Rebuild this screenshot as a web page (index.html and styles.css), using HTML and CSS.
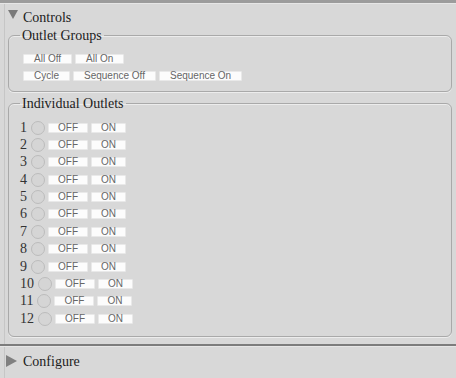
FILE: index.html
```html
<!DOCTYPE html>
<html>
<head>
  <meta charset="utf-8">
  <title>Outlet Controls</title>
  <meta name="viewport" content="width=device-width, initial-scale=1">
  <link rel="stylesheet" href="styles.css">
</head>
<body>
  <div class="panel">
    <div class="section">
      <div class="section-head"><span class="tri tri--open"></span>Controls</div>

      <fieldset class="group group--groups">
        <legend>Outlet Groups</legend>
        <div class="btn-row">
          <button class="btn">All Off</button>
          <button class="btn">All On</button>
        </div>
        <div class="btn-row">
          <button class="btn">Cycle</button>
          <button class="btn">Sequence Off</button>
          <button class="btn">Sequence On</button>
        </div>
      </fieldset>

      <fieldset class="group group--outlets">
        <legend>Individual Outlets</legend>
        <div class="outlet"><span class="num">1</span><span class="led"></span><button class="btn btn--off">OFF</button><button class="btn btn--on">ON</button></div>
        <div class="outlet"><span class="num">2</span><span class="led"></span><button class="btn btn--off">OFF</button><button class="btn btn--on">ON</button></div>
        <div class="outlet"><span class="num">3</span><span class="led"></span><button class="btn btn--off">OFF</button><button class="btn btn--on">ON</button></div>
        <div class="outlet"><span class="num">4</span><span class="led"></span><button class="btn btn--off">OFF</button><button class="btn btn--on">ON</button></div>
        <div class="outlet"><span class="num">5</span><span class="led"></span><button class="btn btn--off">OFF</button><button class="btn btn--on">ON</button></div>
        <div class="outlet"><span class="num">6</span><span class="led"></span><button class="btn btn--off">OFF</button><button class="btn btn--on">ON</button></div>
        <div class="outlet"><span class="num">7</span><span class="led"></span><button class="btn btn--off">OFF</button><button class="btn btn--on">ON</button></div>
        <div class="outlet"><span class="num">8</span><span class="led"></span><button class="btn btn--off">OFF</button><button class="btn btn--on">ON</button></div>
        <div class="outlet"><span class="num">9</span><span class="led"></span><button class="btn btn--off">OFF</button><button class="btn btn--on">ON</button></div>
        <div class="outlet"><span class="num">10</span><span class="led"></span><button class="btn btn--off">OFF</button><button class="btn btn--on">ON</button></div>
        <div class="outlet"><span class="num">11</span><span class="led"></span><button class="btn btn--off">OFF</button><button class="btn btn--on">ON</button></div>
        <div class="outlet"><span class="num">12</span><span class="led"></span><button class="btn btn--off">OFF</button><button class="btn btn--on">ON</button></div>
      </fieldset>
    </div>

    <div class="section section--closed">
      <div class="section-head"><span class="tri tri--closed"></span>Configure</div>
    </div>
  </div>
</body>
</html>
```

FILE: styles.css
```css
body {
  margin: 0;
  background-color: #d8d8d8;
  color: #1c1c1c;
  font-family: "Liberation Serif", "Times New Roman", serif;
  font-size: 14px;
  line-height: 16px;
}

.panel {
  margin-left: 4px;
  border-left: 1px solid #c6c6c6;
  min-height: 378px;
}

.section {
  border-top: 3px solid #9c9c9c;
  box-shadow: inset 0 1px 0 #e6e6e6;
  margin-left: -5px;
  padding-left: 5px;
}

.section--closed {
  margin-top: 7px;
  border-top: 2px solid #7c7c7c;
}

.section-head {
  display: flex;
  align-items: flex-start;
  padding-top: 7px;
}

.section--closed .section-head {
  padding-top: 8px;
}

.tri {
  width: 0;
  height: 0;
  margin-right: 5px;
}

.tri--open {
  margin-left: 3px;
  border-left: 5px solid transparent;
  border-right: 5px solid transparent;
  border-top: 9px solid #7a7a7a;
}

.tri--closed {
  margin-left: 1px;
  margin-top: 1px;
  border-top: 6px solid transparent;
  border-bottom: 6px solid transparent;
  border-left: 11px solid #808080;
  margin-right: 6px;
}

/* fieldsets */

.group {
  margin: 1px 4px 0 3px;
  padding: 10px 8px 10px 11px;
  border: 1px solid #a9a9a9;
  border-radius: 6px;
  box-shadow: inset 0 1px 0 #ececec, 0 1px 0 #ececec;
  min-width: 0;
}

.group legend {
  padding: 1px 2px 0;
  margin-left: 0;
}

.group--outlets {
  margin-top: 3px;
  padding-top: 7px;
  padding-bottom: 9px;
}

.btn-row {
  display: flex;
  gap: 3px;
  margin-left: 3px;
}

.btn-row + .btn-row {
  margin-top: 7px;
}

.btn {
  margin: 0;
  height: 10px;
  padding: 0 10px;
  border: 1px solid #e9e9e9;
  border-radius: 1px;
  background-color: #fcfcfc;
  color: #666;
  font-family: "Liberation Sans", Arial, sans-serif;
  font-size: 10px;
  line-height: 8px;
}

/* outlets */

.outlet {
  display: flex;
  align-items: center;
  height: 17.36px;
}

.num {
  color: #333;
}

.led {
  width: 12px;
  height: 12px;
  margin: 0 3px 0 4px;
  border: 1px solid #bcbcbc;
  border-radius: 50%;
  background-color: #d5d5d5;
}

.btn--off {
  padding: 0 9px;
  margin-right: 3px;
}

.btn--on {
  padding: 0 9px;
}
```
